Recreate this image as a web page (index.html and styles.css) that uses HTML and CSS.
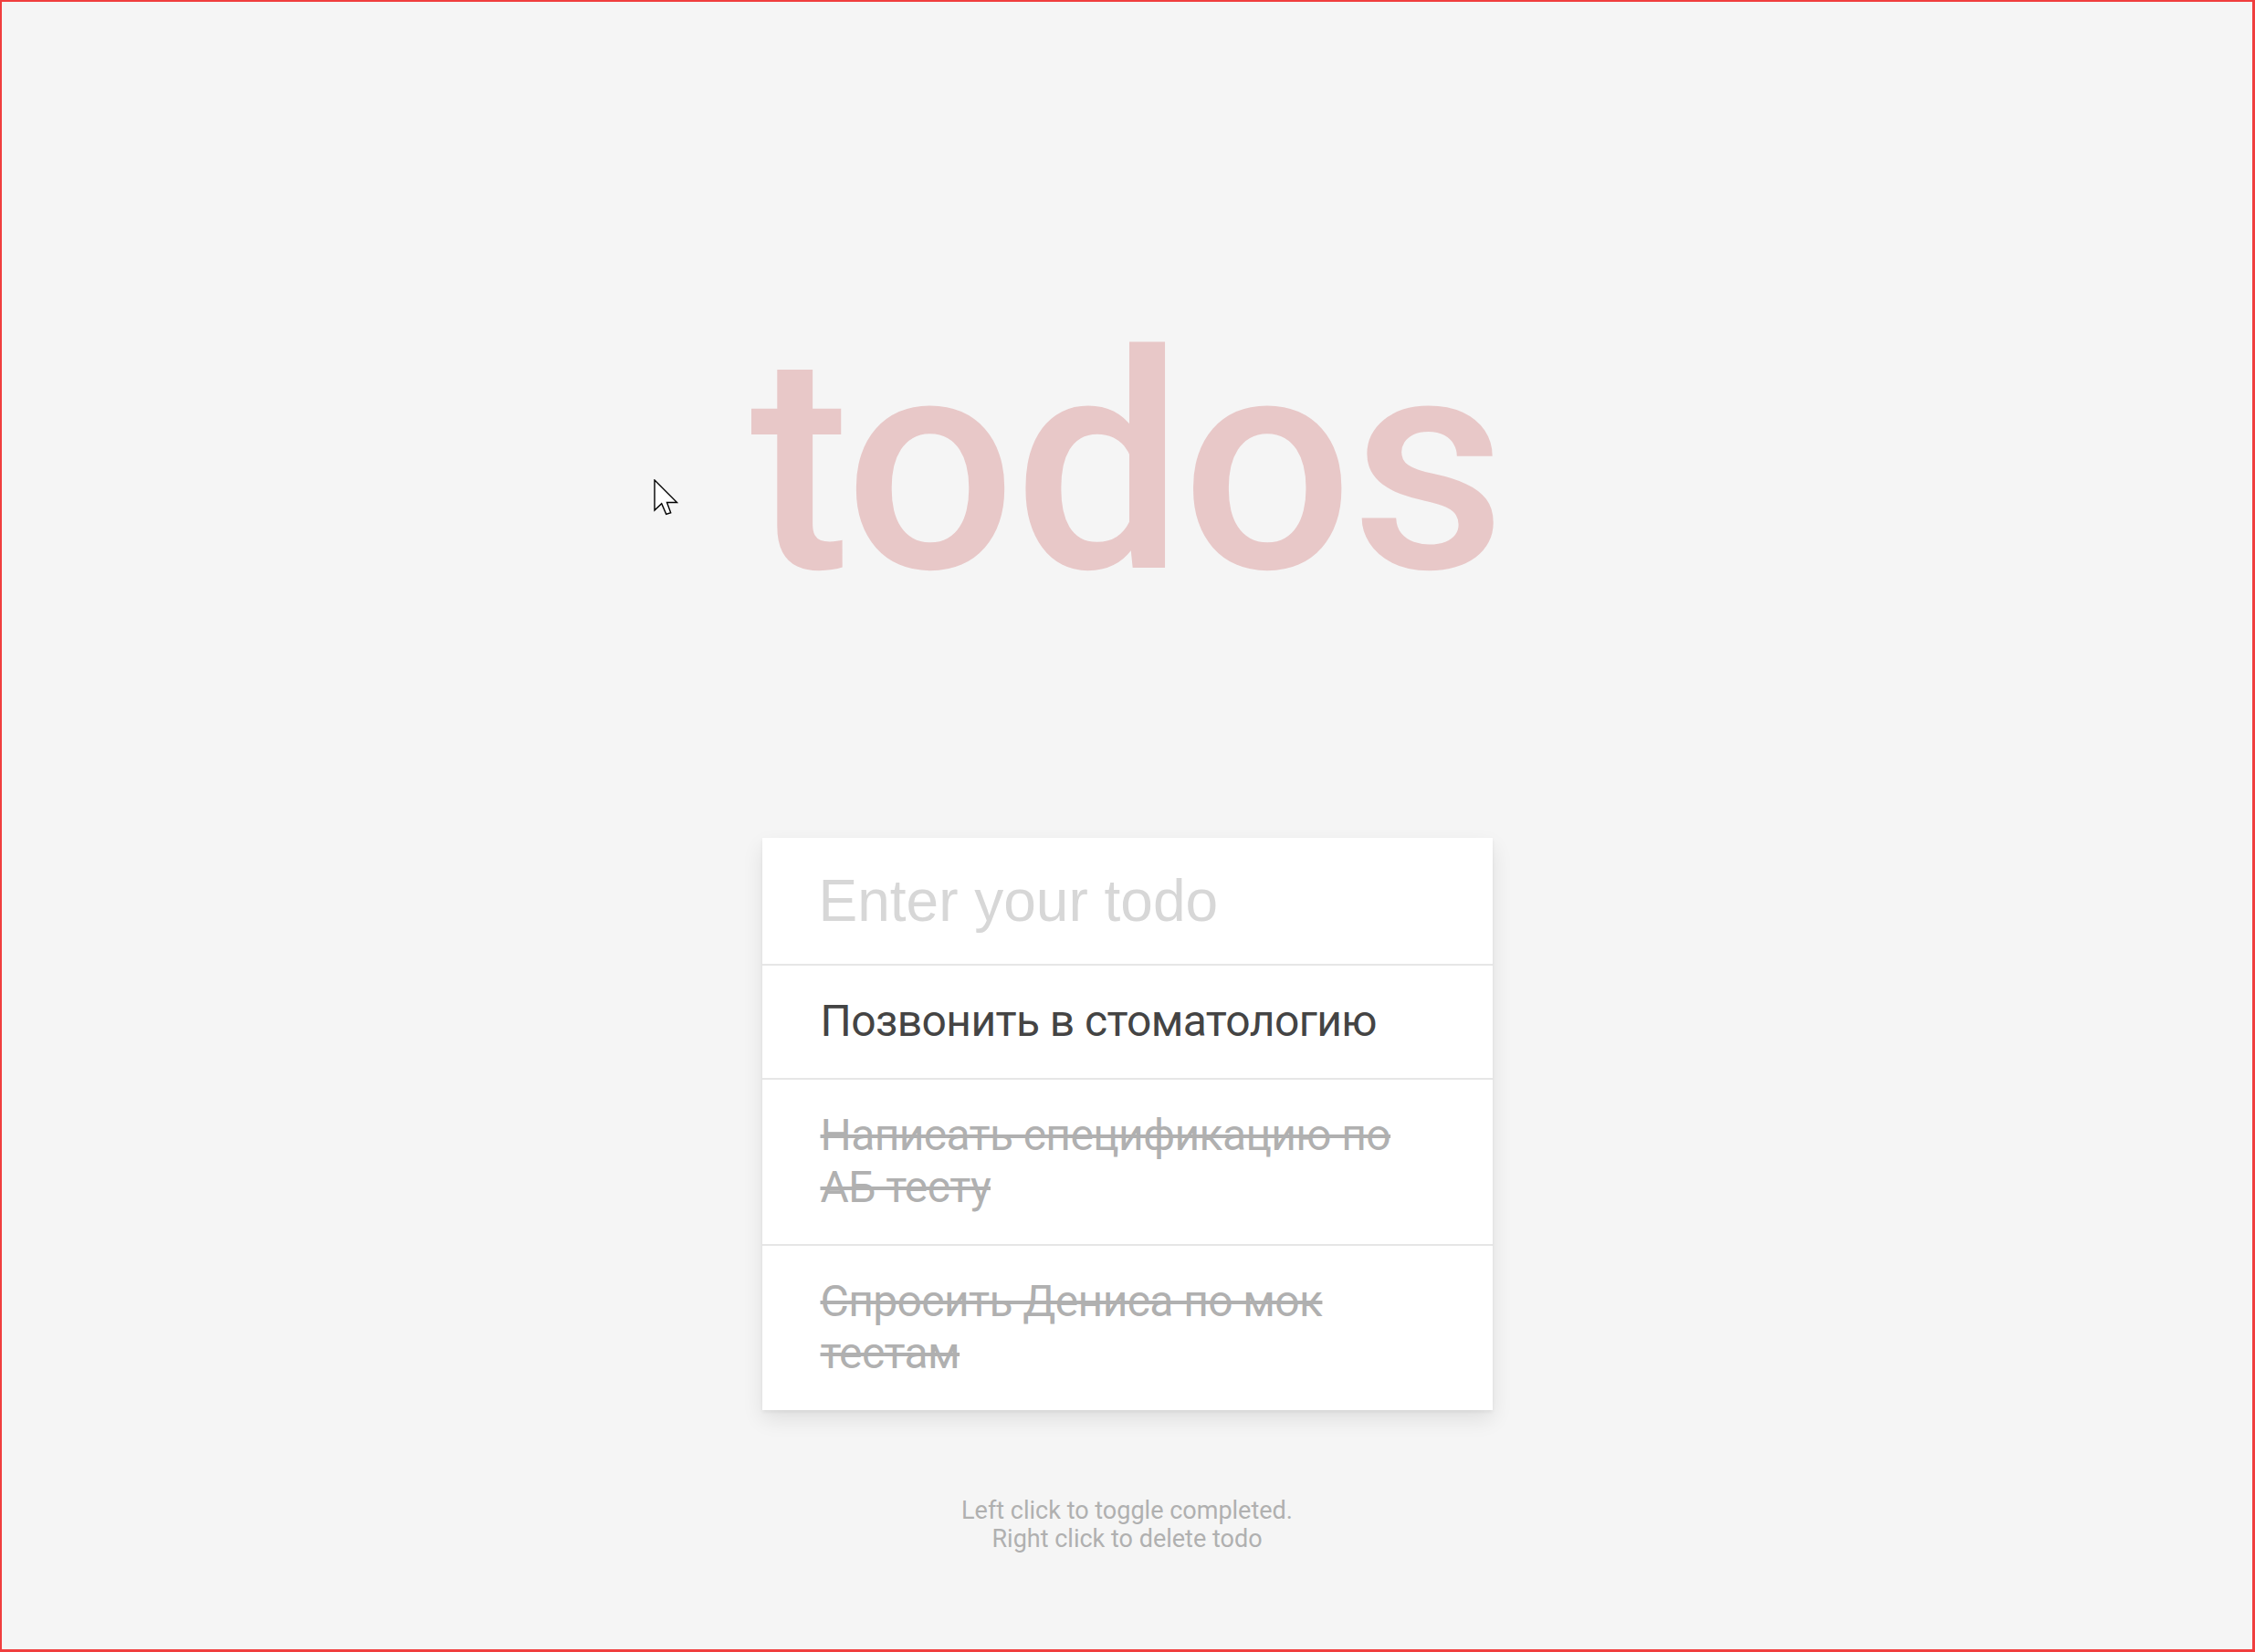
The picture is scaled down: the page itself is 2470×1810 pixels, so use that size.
FILE: index.html
```html
<!DOCTYPE html>
<html lang="ru">
<head>
<meta charset="utf-8">
<title>todos</title>
<link rel="stylesheet" href="styles.css">
</head>
<body>
<div class="frame">
  <main class="app">
    <h1 class="title">todos</h1>
    <section class="card">
      <input class="new-todo" type="text" placeholder="Enter your todo">
      <ul class="list">
        <li class="item">Позвонить в стоматологию</li>
        <li class="item done">Написать спецификацию по АБ тесту</li>
        <li class="item done">Спросить Дениса по мок тестам</li>
      </ul>
    </section>
    <p class="hint">Left click to toggle completed.<br>Right click to delete todo</p>
  </main>
  <svg class="cursor" width="28" height="40" viewBox="0 0 28 40" aria-hidden="true">
    <path d="M1 1 L1 34 L8.7 26.7 L13.7 38.3 L18.7 36.7 L14.5 25.5 L25.5 25.5 Z" fill="#ffffff" stroke="#000000" stroke-width="1.4" stroke-linejoin="miter"/>
  </svg>
</div>
</body>
</html>
```
FILE: styles.css
```css
* {
  box-sizing: border-box;
}

html, body {
  margin: 0;
  padding: 0;
}

body {
  background: #f5f5f5;
  font-family: Roboto, "Noto Sans", "DejaVu Sans", sans-serif;
}

.frame {
  position: relative;
  width: 2470px;
  height: 1810px;
  border-style: solid;
  border-color: #f03e3e;
  border-width: 2px 3px 3px 2px;
  background: #f5f5f5;
  overflow: hidden;
}

.app {
  display: flex;
  flex-direction: column;
  align-items: center;
  padding-top: 343px;
}

.title {
  margin: 0 0 243px;
  font-size: 330px;
  line-height: 330px;
  font-weight: 500;
  color: #e8c8c8;
  letter-spacing: -2px;
  text-align: center;
}

.card {
  width: 800px;
  background: #ffffff;
  box-shadow: 0 2px 4px rgba(0, 0, 0, 0.06), 0 10px 22px rgba(0, 0, 0, 0.09);
}

.new-todo {
  display: block;
  width: 100%;
  height: 140px;
  margin: 0;
  padding: 0 62px;
  border: none;
  border-bottom: 2px solid #e6e6e6;
  background: transparent;
  font-family: "Liberation Sans", Arial, sans-serif;
  font-size: 64px;
  color: #444;
  outline: none;
}

.new-todo::placeholder {
  color: #d7d7d7;
}

.list {
  list-style: none;
  margin: 0;
  padding: 0;
}

.item {
  padding: 32px 64px 33px;
  font-size: 48px;
  line-height: 1.2;
  letter-spacing: -0.6px;
  color: #444444;
  border-bottom: 2px solid #e6e6e6;
}

.item:last-child {
  border-bottom: none;
}

.item.done {
  color: #b0b0b0;
  text-decoration: line-through;
}

.hint {
  margin: 95px 0 0;
  font-size: 27px;
  line-height: 31px;
  color: #b0b0b0;
  text-align: center;
}

.cursor {
  position: absolute;
  left: 714px;
  top: 523px;
}
```
